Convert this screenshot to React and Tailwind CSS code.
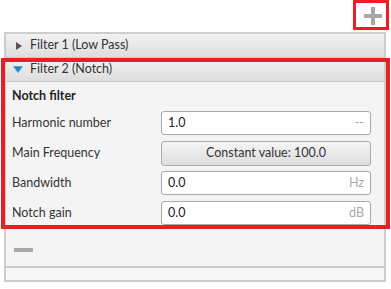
import React from 'react';

const font = { fontFamily: 'Lato, "Noto Sans", sans-serif' };

const Field = ({ value, unit }) => (
  <div className="flex items-center justify-between w-[210px] h-[24px] bg-white border border-[#a9a9a9] rounded-[3px] px-[6px] text-[12.5px] text-[#222]">
    <span>{value}</span>
    <span className="text-[#a8a8a8]">{unit}</span>
  </div>
);

const Row = ({ label, children }) => (
  <div className="flex items-center justify-between h-[24px] pr-[13px]">
    <span className="text-[12.5px] text-[#333]">{label}</span>
    {children}
  </div>
);

export default function App() {
  return (
    <div className="relative w-[391px] h-[289px] bg-white overflow-hidden" style={font}>
      <div className="h-[32px] flex items-center justify-end pr-[9px]">
        <svg width="18" height="18" viewBox="0 0 18 18">
          <rect x="7" y="0" width="4" height="18" fill="#a6a6a6" />
          <rect x="0" y="7" width="18" height="4" fill="#a6a6a6" />
        </svg>
      </div>

      <div className="mx-[4px] mr-[5px] h-[250px] border-2 border-[#cdcdcd] bg-[#f4f4f4] flex flex-col">
        <div className="h-[24px] flex items-center gap-[8px] pl-[10px] border-b border-[#c8c8c8] bg-gradient-to-b from-[#f2f2f2] to-[#dedede] text-[12.5px] text-[#333]">
          <svg width="6" height="8" viewBox="0 0 6 8"><path d="M0 0 L6 4 L0 8 Z" fill="#555" /></svg>
          <span>Filter 1 (Low Pass)</span>
        </div>
        <div className="h-[24px] flex items-center gap-[7px] pl-[7px] border-b border-[#c8c8c8] bg-gradient-to-b from-[#f2f2f2] to-[#dedede] text-[12.5px] text-[#333]">
          <svg width="10" height="8" viewBox="0 0 10 8"><path d="M0 0 L10 0 L5 7 Z" fill="#1b86c4" stroke="#7fc7ee" strokeWidth="1" /></svg>
          <span>Filter 2 (Notch)</span>
        </div>
        <div className="flex flex-col gap-[6px] pl-[6px] pt-[5px] pb-[6px]">
          <div className="h-[18px] text-[12.5px] font-bold text-[#222] leading-[18px]">Notch filter</div>
          <Row label="Harmonic number"><Field value="1.0" unit="--" /></Row>
          <Row label="Main Frequency">
            <button className="w-[210px] h-[25px] border border-[#adadad] rounded-[3px] bg-gradient-to-b from-[#f5f5f5] to-[#dddddd] text-[12.5px] text-[#333]">
              Constant value: 100.0
            </button>
          </Row>
          <Row label="Bandwidth"><Field value="0.0" unit="Hz" /></Row>
          <Row label="Notch gain"><Field value="0.0" unit="dB" /></Row>
        </div>
        <div className="flex-1 flex items-center pl-[8px] pt-[2px]">
          <div className="w-[19px] h-[4px] bg-[#a9a9a9]" />
        </div>
        <div className="h-[14px] border-t-2 border-[#cdcdcd] bg-[#f7f7f7]" />
      </div>

      <div className="absolute left-[353px] top-0 w-[36px] h-[30px] border-[3px] border-[#ee1c25]" />
      <div className="absolute left-[1px] top-[58px] w-[389px] h-[171px] border-[4px] border-[#ee1c25]" />
    </div>
  );
}
